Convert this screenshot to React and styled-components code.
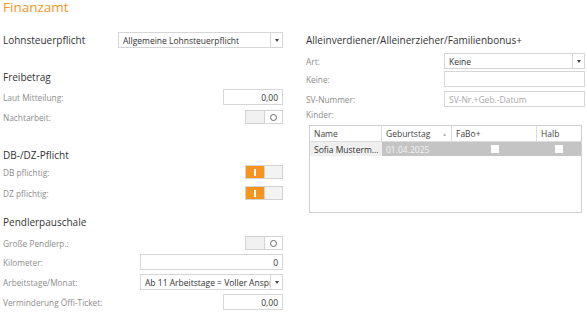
import styled, { createGlobalStyle } from "styled-components";

const GlobalStyle = createGlobalStyle`
    body {
        margin: 0;
        background: #ffffff;
        font-family: "Open Sans", "Noto Sans", sans-serif;
    }
`;

const Page = styled.div`
    width: 587px;
    height: 313px;
    padding: 0 2px 0 3px;
    box-sizing: border-box;
    overflow: hidden;
`;

const Title = styled.h1`
    margin: 0;
    height: 16px;
    font-size: 13.5px;
    line-height: 15px;
    font-weight: 400;
    color: #f7941d;
`;

const Columns = styled.div`
    display: grid;
    grid-template-columns: 280px 279px;
    column-gap: 23px;
    margin-top: 16px;
`;

const Column = styled.div`
    display: flex;
    flex-direction: column;
`;

const Heading = styled.h2`
    margin: ${(p) => p.$mt || 0}px 0 0;
    height: 14px;
    font-size: 10px;
    line-height: 14px;
    font-weight: 400;
    color: #333333;
    white-space: nowrap;
`;

const Row = styled.div`
    display: flex;
    align-items: center;
    justify-content: space-between;
    height: 16px;
    margin-top: ${(p) => p.$mt || 0}px;
`;

const Label = styled.span`
    color: ${(p) => (p.$strong ? "#333333" : "#8c8c8c")};
    font-size: ${(p) => (p.$strong ? "10px" : "8.3px")};
    white-space: nowrap;
`;

const Input = styled.div`
    width: ${(p) => p.$w}px;
    height: 16px;
    box-sizing: border-box;
    border: 1px solid #d6d6d6;
    background: #ffffff;
    display: flex;
    align-items: center;
    justify-content: ${(p) => (p.$left ? "flex-start" : "flex-end")};
    padding: 0 4px;
    font-size: 8.5px;
    color: ${(p) => (p.$placeholder ? "#a8a8a8" : "#333333")};
    white-space: nowrap;
    overflow: hidden;
`;

const Select = styled.div`
    width: ${(p) => p.$w}px;
    height: 16px;
    box-sizing: border-box;
    border: 1px solid #d6d6d6;
    background: #ffffff;
    display: flex;
`;

const SelectValue = styled.div`
    flex: 1;
    min-width: 0;
    display: flex;
    align-items: center;
    padding: 0 4px;
    font-size: 8.5px;
    color: #333333;
    white-space: nowrap;
    overflow: hidden;
`;

const SelectArrow = styled.div`
    width: 11px;
    border-left: 1px solid #d6d6d6;
    display: flex;
    align-items: center;
    justify-content: center;
    &::after {
        content: "";
        border-left: 2.5px solid transparent;
        border-right: 2.5px solid transparent;
        border-top: 3px solid #444444;
    }
`;

const Toggle = styled.div`
    width: 38px;
    height: 14px;
    box-sizing: border-box;
    border: 1px solid #d3d3d3;
    display: flex;
`;

const ToggleHalf = styled.div`
    flex: 1;
    display: flex;
    align-items: center;
    justify-content: center;
    background: ${(p) => p.$bg};
    & + & {
        border-left: 1px solid #d3d3d3;
    }
`;

const OnMark = styled.span`
    width: 1.5px;
    height: 7px;
    background: #ffffff;
`;

const OffMark = styled.span`
    width: 5px;
    height: 5px;
    border: 1px solid #666666;
    border-radius: 50%;
`;

const Switch = ({ on }) => (
    <Toggle>
        {on ? (
            <>
                <ToggleHalf $bg="#f7941d"><OnMark /></ToggleHalf>
                <ToggleHalf $bg="#f3f3f3" />
            </>
        ) : (
            <>
                <ToggleHalf $bg="#f1f1f1" />
                <ToggleHalf $bg="#ffffff"><OffMark /></ToggleHalf>
            </>
        )}
    </Toggle>
);

const Dropdown = ({ w, children }) => (
    <Select $w={w}>
        <SelectValue>{children}</SelectValue>
        <SelectArrow />
    </Select>
);

const SmallLabel = styled.div`
    margin-top: ${(p) => p.$mt || 0}px;
    height: 12px;
    line-height: 12px;
    font-size: 8.3px;
    color: #8c8c8c;
`;

const Table = styled.div`
    margin: 4px 0 0 3px;
    width: 273px;
    height: 88px;
    box-sizing: border-box;
    border: 1px solid #cfcfcf;
    background: #ffffff;
`;

const TableRow = styled.div`
    display: grid;
    grid-template-columns: 72px 70px 85px 1fr;
    height: ${(p) => p.$h}px;
    border-bottom: ${(p) => (p.$header ? "1px solid #dcdcdc" : "none")};
`;

const Cell = styled.div`
    display: flex;
    align-items: center;
    justify-content: ${(p) => (p.$center ? "center" : "space-between")};
    padding: 0 4px;
    font-size: 8.5px;
    color: ${(p) => p.$color || "#444444"};
    background: ${(p) => p.$bg || "transparent"};
    border-right: ${(p) => (p.$header ? "1px solid #dcdcdc" : "none")};
    white-space: nowrap;
    overflow: hidden;
    &:last-child {
        border-right: none;
    }
`;

const SortArrow = styled.span`
    font-size: 5px;
    color: #b5b5b5;
`;

const Check = styled.span`
    width: 8px;
    height: 8px;
    background: #ffffff;
`;

export default function App() {
    return (
        <Page>
            <GlobalStyle />
            <Title>Finanzamt</Title>
            <Columns>
                <Column>
                    <Row>
                        <Label $strong>Lohnsteuerpflicht</Label>
                        <Dropdown w={165}>Allgemeine Lohnsteuerpflicht</Dropdown>
                    </Row>

                    <Heading $mt={22}>Freibetrag</Heading>
                    <Row $mt={5}>
                        <Label>Laut Mitteilung:</Label>
                        <Input $w={60}>0,00</Input>
                    </Row>
                    <Row $mt={4}>
                        <Label>Nachtarbeit:</Label>
                        <Switch />
                    </Row>

                    <Heading $mt={23}>DB-/DZ-Pflicht</Heading>
                    <Row $mt={2}>
                        <Label>DB pflichtig:</Label>
                        <Switch on />
                    </Row>
                    <Row $mt={5}>
                        <Label>DZ pflichtig:</Label>
                        <Switch on />
                    </Row>

                    <Heading $mt={14}>Pendlerpauschale</Heading>
                    <Row $mt={6}>
                        <Label>Große Pendlerp.:</Label>
                        <Switch />
                    </Row>
                    <Row $mt={3}>
                        <Label>Kilometer:</Label>
                        <Input $w={143}>0</Input>
                    </Row>
                    <Row $mt={4}>
                        <Label>Arbeitstage/Monat:</Label>
                        <Dropdown w={143}>Ab 11 Arbeitstage = Voller Anspruch</Dropdown>
                    </Row>
                    <Row $mt={4}>
                        <Label>Verminderung Öffi-Ticket:</Label>
                        <Input $w={60}>0,00</Input>
                    </Row>
                </Column>

                <Column>
                    <Heading $mt={1}>Alleinverdiener/Alleinerzieher/Familienbonus+</Heading>
                    <Row $mt={6}>
                        <Label>Art:</Label>
                        <Dropdown w={141}>Keine</Dropdown>
                    </Row>
                    <Row $mt={2}>
                        <Label>Keine:</Label>
                        <Input $w={141} />
                    </Row>
                    <Row $mt={4}>
                        <Label>SV-Nummer:</Label>
                        <Input $w={141} $left $placeholder>SV-Nr.+Geb.-Datum</Input>
                    </Row>
                    <SmallLabel $mt={2}>Kinder:</SmallLabel>
                    <Table>
                        <TableRow $header $h={15}>
                            <Cell $header>Name</Cell>
                            <Cell $header>Geburtstag <SortArrow>▲</SortArrow></Cell>
                            <Cell $header>FaBo+</Cell>
                            <Cell $header>Halb</Cell>
                        </TableRow>
                        <TableRow $h={14}>
                            <Cell $bg="#efefef" $color="#333333">Sofia Musterm...</Cell>
                            <Cell $bg="#c4c4c4" $color="#f2f2f2">01.04.2025</Cell>
                            <Cell $bg="#c4c4c4" $center><Check /></Cell>
                            <Cell $bg="#c4c4c4" $center><Check /></Cell>
                        </TableRow>
                    </Table>
                </Column>
            </Columns>
        </Page>
    );
}
